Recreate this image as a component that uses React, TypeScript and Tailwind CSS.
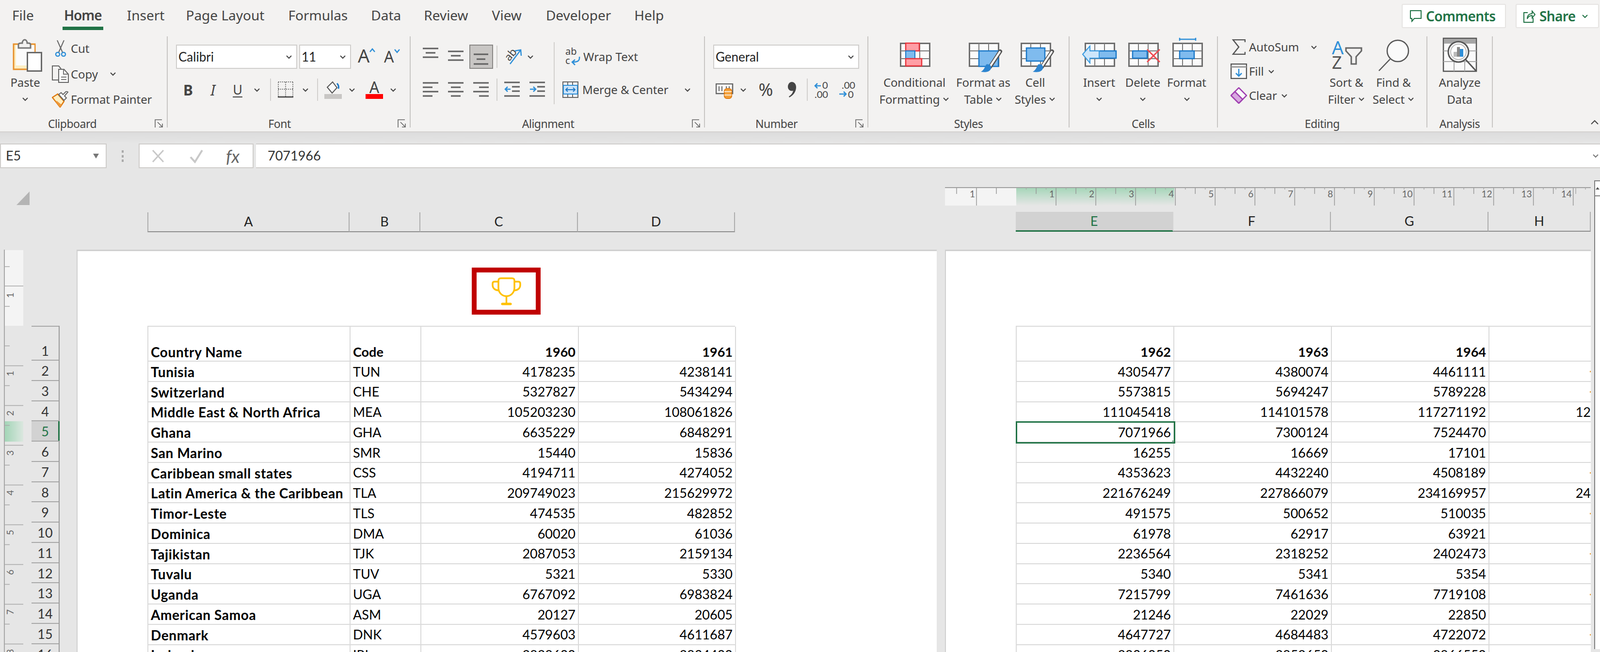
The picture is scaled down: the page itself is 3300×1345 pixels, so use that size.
import React from 'react';

const G = '#6e6e6e';
const BLUE = '#7fbbee';
const BLUE_LINE = '#1b78c8';

const Chev = ({ color = '#444' }: { color?: string }) => (
  <svg width="14" height="9" viewBox="0 0 14 9" className="shrink-0">
    <path d="M2 2l5 5 5-5" stroke={color} strokeWidth="2" fill="none" />
  </svg>
);

const Launcher = () => (
  <svg width="18" height="18" viewBox="0 0 18 18" className="absolute right-[7px] top-[7px]">
    <path d="M1 17V1h14M6 6l10 10M16 9v7H9" stroke="#666" strokeWidth="1.6" fill="none" />
  </svg>
);

const Group = ({
  label,
  launcher,
  className,
  labelClass = '',
  children,
}: {
  label: string;
  launcher?: boolean;
  className: string;
  labelClass?: string;
  children: React.ReactNode;
}) => (
  <section className={`flex h-[188px] shrink-0 flex-col border-r-2 border-[#c8c6c4] ${className}`}>
    <div className="min-h-0 flex-1">{children}</div>
    <div className={`relative h-[24px] pt-[4px] text-center text-[23px] leading-[24px] tracking-[-0.5px] text-[#444] ${labelClass}`}>
      {label}
      {launcher && <Launcher />}
    </div>
  </section>
);

const Big = ({
  icon,
  top,
  bottom,
  chev,
  className,
}: {
  icon: React.ReactNode;
  top: string;
  bottom?: string;
  chev?: boolean;
  className: string;
}) => (
  <div className={`flex shrink-0 flex-col items-center text-[24px] tracking-[-0.1px] text-[#444] ${className}`}>
    <svg width="72" height="77" viewBox="0 0 72 77" className="overflow-visible">
      {icon}
    </svg>
    <div className="h-[35px] whitespace-nowrap leading-[35px]">{top}</div>
    <div className="flex h-[35px] items-center gap-[6px] whitespace-nowrap leading-[35px]">
      {bottom}
      {chev && <Chev />}
    </div>
  </div>
);

const Small = ({
  icon,
  text,
  chev,
  className = '',
}: {
  icon: React.ReactNode;
  text: string;
  chev?: React.ReactNode;
  className?: string;
}) => (
  <div className={`flex items-center text-[24px] tracking-[-0.1px] text-[#444] ${className}`}>
    <div className="flex w-[42px] shrink-0 justify-center">{icon}</div>
    <span className="whitespace-nowrap">{text}</span>
    {chev}
  </div>
);

const Sep = ({ className = 'h-[48px]' }: { className?: string }) => (
  <div className={`w-[2px] shrink-0 bg-[#d2d0ce] ${className}`} />
);

const SheetGrid = () => (
  <g>
    <rect x="7.5" y="14.5" width="60" height="47" fill="#fbfbfb" stroke={G} strokeWidth="3" />
    <path d="M27 14v47M47 14v47M7 30h60M7 46h60" stroke="#7a7a7a" strokeWidth="2" />
  </g>
);

const Brush = ({ dx }: { dx: number }) => (
  <g transform={`translate(${dx} 0)`}>
    <path d="M71 31L50 63" stroke="#555" strokeWidth="8" strokeLinecap="round" />
    <path d="M70 32L50 62" stroke="#fff" strokeWidth="4" strokeLinecap="round" />
    <path d="M42 58c8-2 11 3 10 8-2 7-10 9-21 7 6-3 8-9 11-15z" fill="#2d84cf" />
  </g>
);

const Band = (p: { x: number; y: number; w: number; h: number }) => (
  <rect x={p.x} y={p.y} width={p.w} height={p.h} fill={BLUE} stroke={BLUE_LINE} strokeWidth="2.5" />
);

const lines = (rows: [number, number, number][], color = '#5f5f5f') =>
  rows.map(([y, a, b], i) => <path key={i} d={`M${a} ${y}H${b}`} stroke={color} strokeWidth="3" />);

const Align = ({ rows, className = '' }: { rows: [number, number, number][]; className?: string }) => (
  <svg width="32" height="50" viewBox="0 0 32 50" className={`shrink-0 ${className}`}>
    {lines(rows)}
  </svg>
);

const Indent = ({ inc, className = '' }: { inc?: boolean; className?: string }) => (
  <svg width="32" height="50" viewBox="0 0 32 50" className={`shrink-0 ${className}`}>
    {lines([
      [10, 0, 32],
      [19, 16, 32],
      [28, 16, 32],
      [38, 0, 32],
    ])}
    {inc ? (
      <path d="M1 24h12M8 19l5 5-5 5" stroke="#2e8fd8" strokeWidth="2.5" fill="none" />
    ) : (
      <path d="M13 24H2M7 19l-5 5 5 5" stroke="#2e8fd8" strokeWidth="2.5" fill="none" />
    )}
  </svg>
);

const FONT_SWATCH = 'flex h-[50px] items-center border-2 border-[#d0cecc] bg-white pl-[3px] pr-[8px] text-[26px] text-[#222]';

const Clipboard = () => (
  <Group label="Clipboard" launcher labelClass="pr-[46px]" className="w-[346px]">
    <div className="flex">
      <Big
        className="w-[104px]"
        top="Paste"
        chev
        icon={
          <g transform="translate(11 0)">
            <rect x="1" y="16" width="44" height="52" fill="#fdeec2" stroke="#e8912d" strokeWidth="3" />
            <rect x="6" y="18" width="38" height="42" fill="#fbfbfb" />
            <path d="M11 24v-7c0-2 2-3 5-3h3c0-5 3-7 5-7s5 2 5 7h3c3 0 4 1 4 3v7z" fill="#f3f2f1" stroke="#777" strokeWidth="3" />
            <rect x="29.500" y="33.500" width="29" height="38" fill="#fff" stroke="#6a6a6a" strokeWidth="3" />
          </g>
        }
      />
      <div className="-mt-[1px] flex flex-col">
        <Small
          className="h-[52px]"
          text="Cut"
          icon={
            <svg width="24" height="34" viewBox="0 0 24 34">
              <path d="M5 0l11 25M19 0L8 25" stroke="#666" strokeWidth="2" fill="none" />
              <circle cx="6" cy="29" r="4" fill="none" stroke="#2e8fd8" strokeWidth="2.5" />
              <circle cx="18" cy="29" r="4" fill="none" stroke="#2e8fd8" strokeWidth="2.5" />
            </svg>
          }
        />
        <Small
          className="h-[53px]"
          text="Copy"
          chev={
            <span className="ml-[24px]">
              <Chev />
            </span>
          }
          icon={
            <svg width="36" height="36" viewBox="0 0 36 36">
              <path d="M14 30H1V1h13l5 6" stroke="#666" strokeWidth="2" fill="none" />
              <path d="M14 8h11l9 10v17H14z" fill="#fafafa" stroke="#666" strokeWidth="2" />
              <path d="M24 8v10h10M19 24h11M19 29h11" stroke="#777" strokeWidth="2" fill="none" />
            </svg>
          }
        />
        <Small
          className="h-[52px]"
          text="Format Painter"
          icon={
            <svg width="36" height="34" viewBox="0 0 36 34">
              <path d="M1 13L17 33l8-12L12 6z" fill="#fdeec2" stroke="#e07b10" strokeWidth="2.5" />
              <path d="M8 22l9 11 3-5-10-8z" fill="#ef9a3c" />
              <path d="M14 7l11 12 5-5-4-4 7-8-3-2-7 7-4-4z" fill="#fafafa" stroke="#666" strokeWidth="2" />
            </svg>
          }
        />
      </div>
    </div>
  </Group>
);

const Font = () => (
  <Group label="Font" launcher labelClass="pr-[38px]" className="w-[501px]">
    <div className="mt-[17px] flex items-center">
      <div className={`ml-[17px] w-[250px] justify-between ${FONT_SWATCH} [font-family:Lato,sans-serif]`}>
        Calibri
        <Chev />
      </div>
      <div className={`ml-[4px] w-[107px] justify-between ${FONT_SWATCH} [font-family:Lato,sans-serif]`}>
        11
        <Chev />
      </div>
      <svg width="90" height="50" viewBox="0 0 90 50" className="ml-[14px] shrink-0 overflow-visible">
        <text x="0" y="37" fontSize="38" fill="#444" fontFamily="Noto Sans">A</text>
        <path d="M25 15l5-6 5 6" stroke="#2e8fd8" strokeWidth="2.5" fill="none" />
        <text x="54" y="37" fontSize="32" fill="#444" fontFamily="Noto Sans">A</text>
        <path d="M76 10l5 6 5-6" stroke="#2e8fd8" strokeWidth="2.5" fill="none" />
      </svg>
    </div>
    <div className="mt-[18px] flex h-[50px] items-center text-[#444]">
      <span className="ml-[17px] w-[50px] text-center text-[30px] font-bold [font-family:'Liberation_Sans',sans-serif]">B</span>
      <span className="w-[52px] text-center text-[30px] italic [font-family:'Liberation_Serif',serif]">I</span>
      <span className="w-[50px] text-center text-[27px] underline underline-offset-4">U</span>
      <div className="flex w-[30px] justify-center">
        <Chev />
      </div>
      <Sep className="ml-[12px] h-[46px]" />
      <svg width="34" height="36" viewBox="0 0 34 36" className="ml-[13px] shrink-0">
        <path d="M2 2h30M2 17h30M17 2v30M2 2v30M32 2v30" stroke="#777" strokeWidth="2" strokeDasharray="2 2" fill="none" />
        <path d="M1 33h32" stroke="#555" strokeWidth="3" />
      </svg>
      <div className="flex w-[48px] justify-center">
        <Chev />
      </div>
      <Sep className="h-[46px]" />
      <svg width="36" height="38" viewBox="0 0 36 38" className="ml-[13px] shrink-0">
        <path d="M6 14L17 3l9 12-10 11z" fill="#fbfbfb" stroke="#555" strokeWidth="2" />
        <path d="M26 6c3 3 4 7 3 11" stroke="#1b78c8" strokeWidth="3" fill="none" />
        <rect x="0" y="28" width="36" height="10" fill="#c8c6c4" />
      </svg>
      <div className="flex w-[42px] justify-center">
        <Chev />
      </div>
      <svg width="36" height="38" viewBox="0 0 36 38" className="ml-[7px] shrink-0 overflow-visible">
        <text x="18" y="26" textAnchor="middle" fontSize="32" fill="#444" fontFamily="Noto Sans">A</text>
        <rect x="0" y="28" width="36" height="10" fill="#f00" />
      </svg>
      <div className="flex w-[42px] justify-center">
        <Chev />
      </div>
    </div>
  </Group>
);

const Alignment = () => (
  <Group label="Alignment" launcher labelClass="pr-[38px]" className="w-[607px]">
    <div className="mt-[12px] flex items-start">
      <div className="mt-[5px] flex w-[295px] shrink-0 flex-col gap-[18px]">
        <div className="flex h-[50px] items-center">
          <Align className="ml-[25px]" rows={[[8, 0, 32], [17, 6, 26], [26, 0, 32]]} />
          <Align className="ml-[20px]" rows={[[14, 0, 32], [23, 6, 26], [32, 0, 32]]} />
          <div className="ml-[12px] flex h-[50px] w-[49px] items-center justify-center border-2 border-[#8a8886] bg-[#c8c6c4]">
            <Align rows={[[20, 0, 30], [30, 6, 24], [40, 0, 30]]} />
          </div>
          <Sep className="ml-[7px] h-[46px]" />
          <svg width="38" height="36" viewBox="0 0 38 36" className="ml-[14px] shrink-0 overflow-visible">
            <text x="0" y="22" fontSize="22" fill="#444" transform="rotate(-50 12 14)" fontFamily="Noto Sans">ab</text>
            <path d="M12 33L34 4M22 6l12-2 1 12" stroke="#2e8fd8" strokeWidth="2.5" fill="none" />
          </svg>
          <div className="ml-[9px]">
            <Chev />
          </div>
        </div>
        <div className="flex h-[50px] items-center">
          <Align className="ml-[25px]" rows={[[11, 0, 32], [20, 0, 20], [29, 0, 32], [38, 0, 20]]} />
          <Align className="ml-[20px]" rows={[[11, 0, 32], [20, 6, 26], [29, 0, 32], [38, 6, 26]]} />
          <Align className="ml-[20px]" rows={[[11, 0, 32], [20, 12, 32], [29, 0, 32], [38, 12, 32]]} />
          <Sep className="ml-[16px] h-[46px]" />
          <Indent className="ml-[14px]" />
          <Indent className="ml-[20px]" inc />
        </div>
      </div>
      <Sep className="h-[128px]" />
      <div className="mt-[5px] flex flex-col gap-[18px]">
        <div className="flex h-[50px] items-center text-[24px] tracking-[0.1px] text-[#444]">
          <svg width="34" height="36" viewBox="0 0 34 36" className="ml-[20px] shrink-0 overflow-visible">
            <text x="2" y="14" fontSize="20" fill="#444" fontFamily="Noto Sans">ab</text>
            <text x="2" y="33" fontSize="20" fill="#444" fontFamily="Noto Sans">c</text>
            <path d="M31 18c1 9-4 11-14 11M22 24l-6 5 6 6" stroke="#2e8fd8" strokeWidth="2.5" fill="none" />
          </svg>
          <span className="ml-[5px] whitespace-nowrap">Wrap Text</span>
        </div>
        <div className="flex h-[50px] items-center text-[24px] tracking-[-0.1px] text-[#444]">
          <svg width="33" height="34" viewBox="0 0 33 34" className="ml-[16px] shrink-0">
            <rect x="1" y="1" width="31" height="32" fill="#fafafa" stroke="#666" strokeWidth="2" />
            <path d="M11 1v7M21 1v7M11 26v7M21 26v7" stroke="#666" strokeWidth="2" />
            <rect x="2" y="8" width="29" height="18" fill="#cbe3f8" stroke="#2e8fd8" strokeWidth="2" />
            <path d="M7 17h19M11 13l-4 4 4 4M22 13l4 4-4 4" stroke="#1b78c8" strokeWidth="2" fill="none" />
          </svg>
          <span className="ml-[8px] whitespace-nowrap">Merge &amp; Center</span>
          <div className="ml-[32px]">
            <Chev />
          </div>
        </div>
      </div>
    </div>
  </Group>
);

const NumberGroup = () => (
  <Group label="Number" launcher labelClass="pr-[40px]" className="w-[337px]">
    <div className={`ml-[17px] mt-[17px] w-[301px] justify-between ${FONT_SWATCH} [font-family:Lato,sans-serif]`}>
      General
      <Chev />
    </div>
    <div className="mt-[18px] flex h-[50px] items-center text-[#444]">
      <svg width="38" height="32" viewBox="0 0 38 32" className="ml-[22px] mt-[6px] shrink-0">
        <rect x="1" y="1" width="34" height="20" fill="#fafafa" stroke="#666" strokeWidth="2.5" />
        <path d="M7 6v10M13 6v10M22 6v4M28 6v4" stroke="#666" strokeWidth="2" />
        <rect x="18" y="11" width="15" height="20" rx="5" fill="#f3a13c" stroke="#e07b10" strokeWidth="2" />
        <path d="M18 17h15M18 24h15" stroke="#fff" strokeWidth="1.5" />
      </svg>
      <div className="ml-[12px]">
        <Chev />
      </div>
      <span className="ml-[23px] w-[33px] text-center text-[36px] font-normal leading-none">%</span>
      <svg width="18" height="32" viewBox="0 0 18 32" className="ml-[28px] shrink-0">
        <path d="M9 0c5 0 9 4 9 11 0 9-6 17-14 21l-1-2c5-3 8-7 9-12-6 2-11-2-11-8C1 4 5 0 9 0z" fill="#444" />
      </svg>
      <Sep className="ml-[22px] h-[46px]" />
      <svg width="34" height="36" viewBox="0 0 34 36" className="ml-[13px] shrink-0 overflow-visible [font-family:Lato,sans-serif]">
        <path d="M14 10H2M7 5l-5 5 5 5" stroke="#2e8fd8" strokeWidth="2.5" fill="none" />
        <text x="17" y="16" fontSize="20" fill="#444">0</text>
        <text x="1" y="35" fontSize="20" fill="#444">.00</text>
      </svg>
      <svg width="36" height="36" viewBox="0 0 36 36" className="ml-[17px] shrink-0 overflow-visible [font-family:Lato,sans-serif]">
        <text x="6" y="16" fontSize="20" fill="#444">.00</text>
        <path d="M1 27h14M10 22l5 5-5 5" stroke="#2e8fd8" strokeWidth="2.5" fill="none" />
        <text x="19" y="35" fontSize="20" fill="#444">0</text>
      </svg>
    </div>
  </Group>
);

const Styles = () => (
  <Group label="Styles" className="w-[415px]">
    <div className="flex">
      <Big
        className="ml-[21px] w-[148px]"
        top="Conditional"
        bottom="Formatting"
        chev
        icon={
          <g>
            <SheetGrid />
            <rect x="18" y="14" width="28" height="16" fill="#ff9ea5" stroke="#e8343c" strokeWidth="2.5" />
            <rect x="18" y="30" width="19" height="16" fill={BLUE} stroke={BLUE_LINE} strokeWidth="2" />
            <rect x="18" y="46" width="33" height="15" fill="#ff9ea5" stroke="#e8343c" strokeWidth="2.5" />
          </g>
        }
      />
      <Big
        className="ml-[11px] w-[114px]"
        top="Format as"
        bottom="Table"
        chev
        icon={
          <g>
            <SheetGrid />
            <Band x={27} y={30} w={40} h={32} />
            <Brush dx={0} />
          </g>
        }
      />
      <Big
        className="ml-[6px] w-[88px]"
        top="Cell"
        bottom="Styles"
        chev
        icon={
          <g>
            <SheetGrid />
            <Band x={18} y={24} w={38} h={27} />
            <Brush dx={0} />
          </g>
        }
      />
    </div>
  </Group>
);

const Cells = () => (
  <Group label="Cells" className="w-[306px]">
    <div className="flex">
      <Big
        className="ml-[16px] w-[90px]"
        top="Insert"
        chev
        icon={
          <g>
            <SheetGrid />
            <Band x={19} y={30} w={52} h={15} />
            <path d="M2 37L17 20v10h19v15H17v10z" fill="#cde6fa" stroke="#3a9be0" strokeWidth="2" />
          </g>
        }
      />
      <Big
        className="w-[90px]"
        top="Delete"
        chev
        icon={
          <g>
            <SheetGrid />
            <Band x={15} y={30} w={30} h={15} />
            <path d="M45 27l26 26M71 27L45 53" stroke="#ef4b52" strokeWidth="3" />
          </g>
        }
      />
      <Big
        className="w-[91px]"
        top="Format"
        chev
        icon={
          <g>
            <SheetGrid />
            <path d="M21 6h33M21 3v6M54 3v6" stroke="#2e8fd8" strokeWidth="2.5" fill="none" />
            <Band x={21} y={30} w={30} h={16} />
          </g>
        }
      />
    </div>
  </Group>
);

const Editing = () => (
  <Group label="Editing" className="w-[432px]">
    <div className="flex">
      <div className="ml-[22px] flex w-[203px] shrink-0 flex-col -mt-[3px]">
        <Small
          className="h-[50px]"
          text="AutoSum"
          chev={
            <span className="ml-[24px]">
              <Chev />
            </span>
          }
          icon={
            <svg width="28" height="32" viewBox="0 0 28 32">
              <path d="M27 6V1H2l12 15L2 31h25v-5" stroke="#555" strokeWidth="2.5" fill="none" />
            </svg>
          }
        />
        <Small
          className="h-[50px]"
          text="Fill"
          chev={
            <span className="ml-[8px]">
              <Chev />
            </span>
          }
          icon={
            <svg width="34" height="32" viewBox="0 0 34 32">
              <rect x="1" y="1" width="32" height="30" fill="#fafafa" stroke="#555" strokeWidth="2.5" />
              <path d="M1 7h32" stroke="#999" strokeWidth="3" />
              <path d="M17 11v15M11 20l6 6 6-6" stroke="#2e8fd8" strokeWidth="2.5" fill="none" />
            </svg>
          }
        />
        <Small
          className="h-[50px]"
          text="Clear"
          chev={
            <span className="ml-[8px]">
              <Chev />
            </span>
          }
          icon={
            <svg width="34" height="34" viewBox="0 0 34 34">
              <path d="M17 1l16 16-16 16L1 17z" fill="#fafafa" stroke="#a03fb0" strokeWidth="2.5" />
              <path d="M9 9l16 16-8 8L1 17z" fill="#d8a8e0" stroke="#a03fb0" strokeWidth="2.5" />
            </svg>
          }
        />
      </div>
      <Big
        className="w-[80px]"
        top="Sort &"
        bottom="Filter"
        chev
        icon={
          <g>
            <text x="6" y="37" fontSize="38" fill="#2e8fd8" fontFamily="Noto Sans">A</text>
            <text x="6" y="67" fontSize="36" fill="#555" fontFamily="Noto Sans">Z</text>
            <path d="M35 24h32v6L56 42v15H46V42L35 30z" fill="none" stroke="#666" strokeWidth="3" />
          </g>
        }
      />
      <Big
        className="ml-[11px] w-[92px]"
        top="Find &"
        bottom="Select"
        chev
        icon={
          <g>
            <circle cx="45" cy="30" r="22" fill="#fafafa" stroke="#555" strokeWidth="2.5" />
            <path d="M29 47L6 71" stroke="#555" strokeWidth="2.5" />
          </g>
        }
      />
    </div>
  </Group>
);

const Analysis = () => (
  <Group label="Analysis" className="w-[135px]">
    <Big
      className="w-[133px]"
      top="Analyze"
      bottom="Data"
      icon={
        <g>
          <rect x="2" y="4" width="68" height="68" fill="#fafafa" stroke="#555" strokeWidth="2.5" />
          <rect x="3" y="5" width="66" height="10" fill="#a6a6a6" />
          <path d="M2 30h68M2 52h68M24 52v20M46 52v20" stroke="#aaa" strokeWidth="2" />
          <circle cx="33" cy="32" r="21" fill="#fafafa" stroke="#555" strokeWidth="3" />
          <circle cx="33" cy="32" r="16" fill="#fff" stroke="#bbb" strokeWidth="2" />
          <rect x="23" y="32" width="8" height="10" fill="#bbb" />
          <rect x="30" y="22" width="6" height="20" fill="#888" />
          <rect x="36" y="26" width="7" height="16" fill="#2e8fd8" />
          <path d="M48 48l22 24" stroke="#555" strokeWidth="3" />
        </g>
      }
    />
  </Group>
);

const TAB = 'flex h-[62px] items-center';

const Ribbon = () => (
  <div className="h-[273px] shrink-0 border-b-2 border-[#d4d2d0] bg-[#f3f2f1] [font-family:'Noto_Sans',sans-serif]">
    <div className="flex h-[75px] text-[28px] text-[#444]">
      <div className={`${TAB} pl-[25px]`}>File</div>
      <div className={`${TAB} ml-[59px] w-[84px] justify-center border-b-[7px] border-[#217346] pt-[7px] font-semibold tracking-[-1px]`}>Home</div>
      <div className={`${TAB} ml-[49px]`}>Insert</div>
      <div className={`${TAB} ml-[44px]`}>Page Layout</div>
      <div className={`${TAB} ml-[49px]`}>Formulas</div>
      <div className={`${TAB} ml-[48px]`}>Data</div>
      <div className={`${TAB} ml-[47px]`}>Review</div>
      <div className={`${TAB} ml-[49px]`}>View</div>
      <div className={`${TAB} ml-[50px]`}>Developer</div>
      <div className={`${TAB} ml-[48px]`}>Help</div>
      <div className="ml-auto mt-[8px] flex h-[50px] w-[215px] items-center gap-[8px] rounded-[3px] border-2 border-[#e6e4e2] bg-white pl-[14px] font-semibold tracking-[-0.6px] text-[#217346]">
        <svg width="26" height="26" viewBox="0 0 26 26">
          <path d="M2 2h22v16H10l-5 6v-6H2z" fill="none" stroke="#217346" strokeWidth="2" />
        </svg>
        Comments
      </div>
      <div className="ml-[20px] mr-[2px] mt-[8px] flex h-[50px] w-[172px] items-center gap-[8px] rounded-[3px] border-2 border-[#e6e4e2] bg-white pl-[13px] font-semibold tracking-[-0.6px] text-[#217346]">
        <svg width="26" height="28" viewBox="0 0 26 28">
          <path d="M10 7H2v20h19v-9M9 20c0-8 5-11 10-11V4l6 7-6 7v-5c-5 0-8 2-10 7z" fill="none" stroke="#217346" strokeWidth="2" />
        </svg>
        Share
        <span className="ml-[4px]">
          <Chev color="#217346" />
        </span>
      </div>
    </div>
    <div className="flex items-start">
      <Clipboard />
      <Font />
      <Alignment />
      <NumberGroup />
      <Styles />
      <Cells />
      <Editing />
      <Analysis />
      <svg width="18" height="10" viewBox="0 0 18 10" className="ml-auto mr-[2px] mt-[172px]">
        <path d="M2 9l7-7 7 7" stroke="#444" strokeWidth="2" fill="none" />
      </svg>
    </div>
  </div>
);

const FormulaBar = () => (
  <div className="flex h-[51px] shrink-0 items-stretch text-[27px] text-[#333] [font-family:Lato,sans-serif]">
    <div className="flex w-[220px] items-center justify-between border-2 border-[#cfcdcb] bg-white pl-[10px] pr-[14px]">
      E5
      <svg width="12" height="10" viewBox="0 0 12 10">
        <path d="M0 0h12L6 10z" fill="#777" />
      </svg>
    </div>
    <div className="flex w-[66px] items-center justify-center">
      <svg width="6" height="24" viewBox="0 0 6 24">
        <path d="M3 0v5M3 10v5M3 19v5" stroke="#aaa" strokeWidth="4" />
      </svg>
    </div>
    <div className="flex w-[237px] items-center border-2 border-[#cfcdcb] bg-white">
      <svg width="28" height="30" viewBox="0 0 28 30" className="ml-[24px]">
        <path d="M3 3l22 24M25 3L3 27" stroke="#c8c8c8" strokeWidth="3" />
      </svg>
      <svg width="30" height="30" viewBox="0 0 30 30" className="ml-[50px]">
        <path d="M3 17l9 10L27 3" stroke="#c8c8c8" strokeWidth="4" fill="none" />
      </svg>
      <span className="ml-[46px] text-[36px] italic text-[#666] [font-family:'Liberation_Serif',serif]">fx</span>
    </div>
    <div className="ml-[5px] flex flex-1 items-center justify-between border-y-2 border-[#cfcdcb] bg-white pl-[24px] pr-[2px]">
      7071966
      <Chev color="#777" />
    </div>
  </div>
);

const inches = Array.from({ length: 14 }, (_, i) => i + 1);

const HRuler = () => (
  <svg width="1332" height="38" viewBox="0 0 1332 38" className="block [font-family:Lato,sans-serif]">
    <defs>
      <linearGradient id="hg" x1="0" y1="0" x2="0" y2="1">
        <stop offset="0" stopColor="#a3d5b7" />
        <stop offset="1" stopColor="#e6e6e6" />
      </linearGradient>
    </defs>
    <rect x="0" y="0" width="147" height="38" fill="#f4f4f4" />
    <rect x="147" y="0" width="326" height="38" fill="url(#hg)" />
    <path d="M0 1h1332" stroke="#a0a0a0" strokeWidth="2" />
    <path d="M65 1v37" stroke="#999" strokeWidth="1.5" />
    <path d="M24 1v13M106 1v13" stroke="#999" strokeWidth="1.5" />
    <text x="62" y="21" fontSize="19" fill="#666" textAnchor="end">1</text>
    {inches.map((n) => {
      const x = 147 + 82.05 * n;
      return (
        <g key={n}>
          <path d={`M${x} 1v37`} stroke="#999" strokeWidth="1.5" />
          <path d={`M${x - 41} 1v13`} stroke="#999" strokeWidth="1.5" />
          <path d={`M${x - 20.5} 1v4M${x - 61.5} 1v4`} stroke="#aaa" strokeWidth="1.5" />
          <text x={x - 3} y="21" fontSize="19" fill="#666" textAnchor="end">{n}</text>
        </g>
      );
    })}
    <path d="M1260 1v4M1301 1v13M1321 1v4" stroke="#aaa" strokeWidth="1.5" />
  </svg>
);

const VRuler = () => (
  <svg width="40" height="830" viewBox="0 0 40 830" className="block shrink-0 [font-family:Lato,sans-serif]">
    <defs>
      <linearGradient id="vg" x1="0" y1="0" x2="1" y2="0">
        <stop offset="0" stopColor="#a3d5b7" />
        <stop offset="1" stopColor="#dbe7df" />
      </linearGradient>
    </defs>
    <rect x="2" y="1" width="38" height="156" fill="#f4f4f4" />
    <rect x="2" y="354" width="38" height="42" fill="url(#vg)" />
    <path d="M1 0v830" stroke="#a8a8a8" strokeWidth="2" />
    <path d="M0 35h12M0 75h40M0 117h12" stroke="#a8a8a8" strokeWidth="1.5" />
    <text transform="translate(20 94) rotate(-90)" fontSize="19" fill="#666" textAnchor="middle">1</text>
    {[1, 2, 3, 4, 5, 6, 7, 8].map((n) => {
      const y = 157.5 + 82 * n;
      return (
        <g key={n}>
          <path d={`M0 ${y}h40`} stroke="#a8a8a8" strokeWidth="1.5" />
          <path d={`M0 ${y - 41}h12`} stroke="#a8a8a8" strokeWidth="1.5" />
          <text transform={`translate(20 ${y + 16}) rotate(-90)`} fontSize="19" fill="#666" textAnchor="middle">{n}</text>
        </g>
      );
    })}
  </svg>
);

const rowsA: [string, string, string, string][] = [
  ['Tunisia', 'TUN', '4178235', '4238141'],
  ['Switzerland', 'CHE', '5327827', '5434294'],
  ['Middle East & North Africa', 'MEA', '105203230', '108061826'],
  ['Ghana', 'GHA', '6635229', '6848291'],
  ['San Marino', 'SMR', '15440', '15836'],
  ['Caribbean small states', 'CSS', '4194711', '4274052'],
  ['Latin America & the Caribbean', 'TLA', '209749023', '215629972'],
  ['Timor-Leste', 'TLS', '474535', '482852'],
  ['Dominica', 'DMA', '60020', '61036'],
  ['Tajikistan', 'TJK', '2087053', '2159134'],
  ['Tuvalu', 'TUV', '5321', '5330'],
  ['Uganda', 'UGA', '6767092', '6983824'],
  ['American Samoa', 'ASM', '20127', '20605'],
  ['Denmark', 'DNK', '4579603', '4611687'],
  ['Ireland', 'IRL', '2828600', '2834400'],
];

const rowsB: [string, string, string][] = [
  ['4305477', '4380074', '4461111'],
  ['5573815', '5694247', '5789228'],
  ['111045418', '114101578', '117271192'],
  ['7071966', '7300124', '7524470'],
  ['16255', '16669', '17101'],
  ['4353623', '4432240', '4508189'],
  ['221676249', '227866079', '234169957'],
  ['491575', '500652', '510035'],
  ['61978', '62917', '63921'],
  ['2236564', '2318252', '2402473'],
  ['5340', '5341', '5354'],
  ['7215799', '7461636', '7719108'],
  ['21246', '22029', '22850'],
  ['4647727', '4684483', '4722072'],
  ['2836050', '2852650', '2866550'],
];

const hClip: Record<number, string> = { 2: '12', 6: '24' };
const hDots = [0, 1, 5, 7, 9, 11, 13];

const CELL = 'flex h-[41.75px] items-center overflow-hidden whitespace-nowrap border-b-2 border-r-2 border-[#dadada] px-[5px] pt-[2px]';
const HEAD = 'flex h-[72px] items-end overflow-hidden border-b-2 border-r-2 border-[#dadada] px-[5px] font-bold leading-[36px]';

const TableA = () => (
  <div className="ml-[144px] grid w-[1212px] grid-cols-[417px_146px_325px_324px] border-l-2 border-t-2 border-[#dadada] text-[27px] text-black [font-family:Lato,sans-serif]">
    <div className={`${HEAD} text-[28px] tracking-[0.6px]`}>Country Name</div>
    <div className={HEAD}>Code</div>
    <div className={`${HEAD} justify-end`}>1960</div>
    <div className={`${HEAD} justify-end`}>1961</div>
    {rowsA.map((r) => (
      <React.Fragment key={r[1]}>
        <div className={`${CELL} text-[28px] font-bold tracking-[0.6px]`}>{r[0]}</div>
        <div className={CELL}>{r[1]}</div>
        <div className={`${CELL} justify-end`}>{r[2]}</div>
        <div className={`${CELL} justify-end`}>{r[3]}</div>
      </React.Fragment>
    ))}
  </div>
);

const TableB = () => (
  <div className="ml-[144px] grid grid-cols-[325px_325px_325px_1fr] border-l-2 border-t-2 border-[#dadada] text-[27px] text-black [font-family:Lato,sans-serif]">
    <div className={`${HEAD} justify-end`}>1962</div>
    <div className={`${HEAD} justify-end`}>1963</div>
    <div className={`${HEAD} justify-end`}>1964</div>
    <div className="h-[72px] border-b-2 border-[#dadada]" />
    {rowsB.map((r, i) => (
      <React.Fragment key={r[0]}>
        {r.map((v, j) =>
          i === 3 && j === 0 ? (
            <div key={v} className={`${CELL} relative justify-end outline-[3px] -outline-offset-1 outline-[#217346]`}>
              {v}
              <span className="absolute bottom-[-4px] right-[-4px] h-[7px] w-[7px] border border-white bg-[#217346]" />
            </div>
          ) : (
            <div key={v} className={`${CELL} justify-end`}>{v}</div>
          ),
        )}
        <div className="flex h-[41.75px] items-center justify-end overflow-hidden border-b-2 border-[#dadada] pt-[2px]">
          {hClip[i]}
          {hDots.includes(i) && <span className="h-[3px] w-[2px] bg-[#e8a040]" />}
        </div>
      </React.Fragment>
    ))}
  </div>
);

const RowHeaders = () => (
  <div className="ml-[17px] mt-[157px] w-[58px] shrink-0 border-r-2 border-[#9c9c9c] text-[27px] text-[#333] [font-family:Lato,sans-serif]">
    <div className="flex h-[72px] items-end justify-center border-y-2 border-[#a8a8a8] leading-[36px]">1</div>
    {Array.from({ length: 15 }, (_, i) => i + 2).map((n) => (
      <div
        key={n}
        className={
          n === 5
            ? 'relative flex h-[41.75px] items-center justify-center border-b-2 border-[#a8a8a8] bg-[#d2d2d2] pt-[3px] text-[#217346] after:absolute after:-right-[2px] after:top-0 after:h-full after:w-[3px] after:bg-[#217346]'
            : 'flex h-[41.75px] items-center justify-center border-b-2 border-[#a8a8a8] pt-[3px]'
        }
      >
        {n}
      </div>
    ))}
  </div>
);

const ColHead = ({ label, active, className }: { label: string; active?: boolean; className: string }) => (
  <div
    className={`flex h-[41px] items-center justify-center border-r-2 ${
      active
        ? 'border-[#d2d2d2] border-b-[3px] border-b-[#217346] bg-[#d2d2d2] text-[#217346]'
        : 'border-[#aeaeae] border-b-2 border-b-[#8e8e8e] text-[#222]'
    } ${className}`}
  >
    {label}
  </div>
);

const Sheet = () => (
  <div className="flex min-h-0 flex-1 flex-col overflow-hidden">
    <div className="flex h-[168px] shrink-0 text-[27px] [font-family:Lato,sans-serif]">
      <div className="w-[304px] shrink-0 pl-[34px] pt-[48px]">
        <svg width="27" height="28" viewBox="0 0 27 28" className="block">
          <path d="M27 0v28H0z" fill="#b4b4b4" />
        </svg>
      </div>
      <div className="mt-[91px] flex w-[1645px] shrink-0">
        <ColHead label="A" className="w-[417px] border-l-2 border-l-[#aeaeae]" />
        <ColHead label="B" className="w-[146px]" />
        <ColHead label="C" className="w-[325px]" />
        <ColHead label="D" className="w-[324px] border-r-0" />
      </div>
      <div className="mt-[39px] w-[1332px] shrink-0">
        <HRuler />
        <div className="ml-[146px] mt-[13px] flex">
          <ColHead label="E" active className="w-[325px]" />
          <ColHead label="F" className="w-[325px]" />
          <ColHead label="G" className="w-[325px]" />
          <ColHead label="H" className="flex-1 border-r-0" />
        </div>
      </div>
    </div>
    <div className="flex min-h-0 flex-1">
      <div className="ml-[8px]">
        <VRuler />
      </div>
      <RowHeaders />
      <div className="ml-[35px] w-[1774px] shrink-0 border-l-2 border-t-[3px] border-[#d0d0d0] bg-white">
        <div className="ml-[813px] mt-[34px] flex h-[97px] w-[142px] items-center justify-center border-[10px] border-[#c00000]">
          <svg width="61" height="58" viewBox="0 0 61 58" fill="none" stroke="#ffc000">
            <path d="M14 7q0-5 5-5h23q5 0 5 5v15c0 9-7 17-16.500 17S14 31 14 22z" strokeWidth="3.500" />
            <path d="M14 9H6q-4 0-4 4v3c0 7 6 11 12 11M47 9h8q4 0 4 4v3c0 7-6 11-12 11M30.500 39v15" strokeWidth="3.500" />
            <path d="M22 55h17" strokeWidth="5" strokeLinecap="round" />
          </svg>
        </div>
        <div className="mt-[23px]">
          <TableA />
        </div>
      </div>
      <div className="ml-[17px] w-[1332px] shrink-0 overflow-hidden border-l-2 border-t-[3px] border-[#d0d0d0] bg-white pt-[154px]">
        <TableB />
      </div>
      <div className="ml-[7px] mb-[6px] -mt-[143px] flex flex-1 flex-col border-l-2 border-[#808080] bg-white">
        <div className="flex h-[33px] items-center justify-center border-b-2 border-t-2 border-[#808080] bg-white">
          <svg width="8" height="5" viewBox="0 0 8 5">
            <path d="M0 5l4-5 4 5z" fill="#555" />
          </svg>
        </div>
      </div>
    </div>
  </div>
);

export default function App() {
  return (
    <div className="flex h-[1345px] w-[3300px] flex-col overflow-hidden bg-[#e6e6e6]">
      <Ribbon />
      <div className="h-[23px] shrink-0 bg-gradient-to-b from-[#dcdcdc] to-[#e6e6e6]" />
      <FormulaBar />
      <Sheet />
    </div>
  );
}
